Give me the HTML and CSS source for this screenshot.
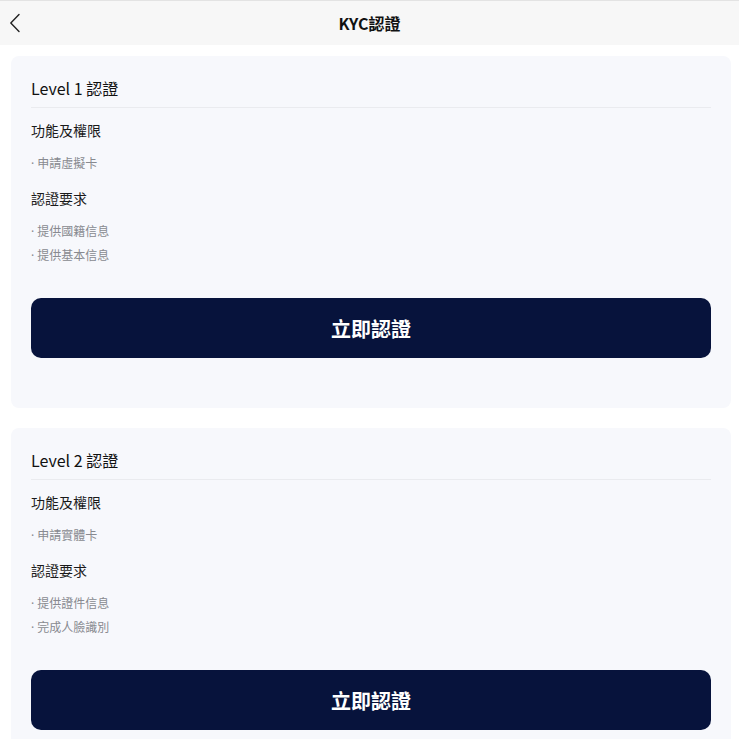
FILE: index.html
```html
<!DOCTYPE html>
<html lang="zh-Hant">
<head>
    <meta charset="UTF-8">
    <meta name="viewport" content="width=device-width, initial-scale=1.0">
    <title>KYC認證</title>
    <link rel="stylesheet" href="styles.css">
</head>
<body>
    <header class="nav-bar">
        <button type="button" class="back-button" aria-label="返回">
            <svg width="12" height="20" viewBox="0 0 12 20" fill="none">
                <path d="M10 1.5 L1.8 10 L10 18.5" stroke="#222" stroke-width="1.4" stroke-linecap="round" stroke-linejoin="round"/>
            </svg>
        </button>
        <h1>KYC認證</h1>
    </header>

    <main class="level-list">
        <section class="level-card">
            <h2>Level 1 認證</h2>
            <h3>功能及權限</h3>
            <ul>
                <li>· 申請虛擬卡</li>
            </ul>
            <h3>認證要求</h3>
            <ul>
                <li>· 提供國籍信息</li>
                <li>· 提供基本信息</li>
            </ul>
            <button type="button" class="verify-button">立即認證</button>
        </section>

        <section class="level-card">
            <h2>Level 2 認證</h2>
            <h3>功能及權限</h3>
            <ul>
                <li>· 申請實體卡</li>
            </ul>
            <h3>認證要求</h3>
            <ul>
                <li>· 提供證件信息</li>
                <li>· 完成人臉識別</li>
            </ul>
            <button type="button" class="verify-button">立即認證</button>
        </section>
    </main>
</body>
</html>
```

FILE: styles.css
```css
* {
    margin: 0;
    padding: 0;
    box-sizing: border-box;
    font-family: "Noto Sans CJK TC", "Noto Sans", sans-serif;
}

body {
    background-color: #ffffff;
    color: #1a1a1a;
}

.nav-bar {
    position: relative;
    display: flex;
    align-items: center;
    justify-content: center;
    height: 45px;
    border-top: 1px solid #e3e3e3;
    background-color: #f7f7f7;
}

.nav-bar h1 {
    font-size: 16px;
    font-weight: bold;
    color: #111;
    line-height: 44px;
}

.back-button {
    position: absolute;
    left: 9px;
    top: 12px;
    border: none;
    background: none;
    cursor: pointer;
    display: flex;
}

.level-list {
    display: flex;
    flex-direction: column;
    gap: 20px;
    width: 720px;
    margin: 11px 0 0 11px;
}

.level-card {
    background-color: #f7f8fc;
    border-radius: 8px;
    padding: 20px 20px 50px;
}

.level-card h2 {
    font-size: 16px;
    font-weight: normal;
    line-height: 24px;
    padding-bottom: 7px;
    border-bottom: 1px solid #eaebef;
    color: #111;
}

.level-card h3 {
    font-size: 14px;
    font-weight: normal;
    line-height: 22px;
    margin-top: 11px;
    color: #1a1a1a;
}

.level-card ul + h3 {
    margin-top: 13px;
}

.level-card ul {
    list-style: none;
    display: flex;
    flex-direction: column;
    gap: 4px;
    margin-top: 13px;
}

.level-card li {
    font-family: "Noto Sans", "Noto Sans CJK TC", sans-serif;
    font-size: 12px;
    line-height: 20px;
    color: #888a90;
}

.verify-button {
    display: block;
    width: 100%;
    height: 60px;
    margin-top: 32px;
    border: none;
    border-radius: 10px;
    background-color: #07133c;
    color: #fff;
    font-size: 20px;
    font-weight: bold;
    cursor: pointer;
}
```
